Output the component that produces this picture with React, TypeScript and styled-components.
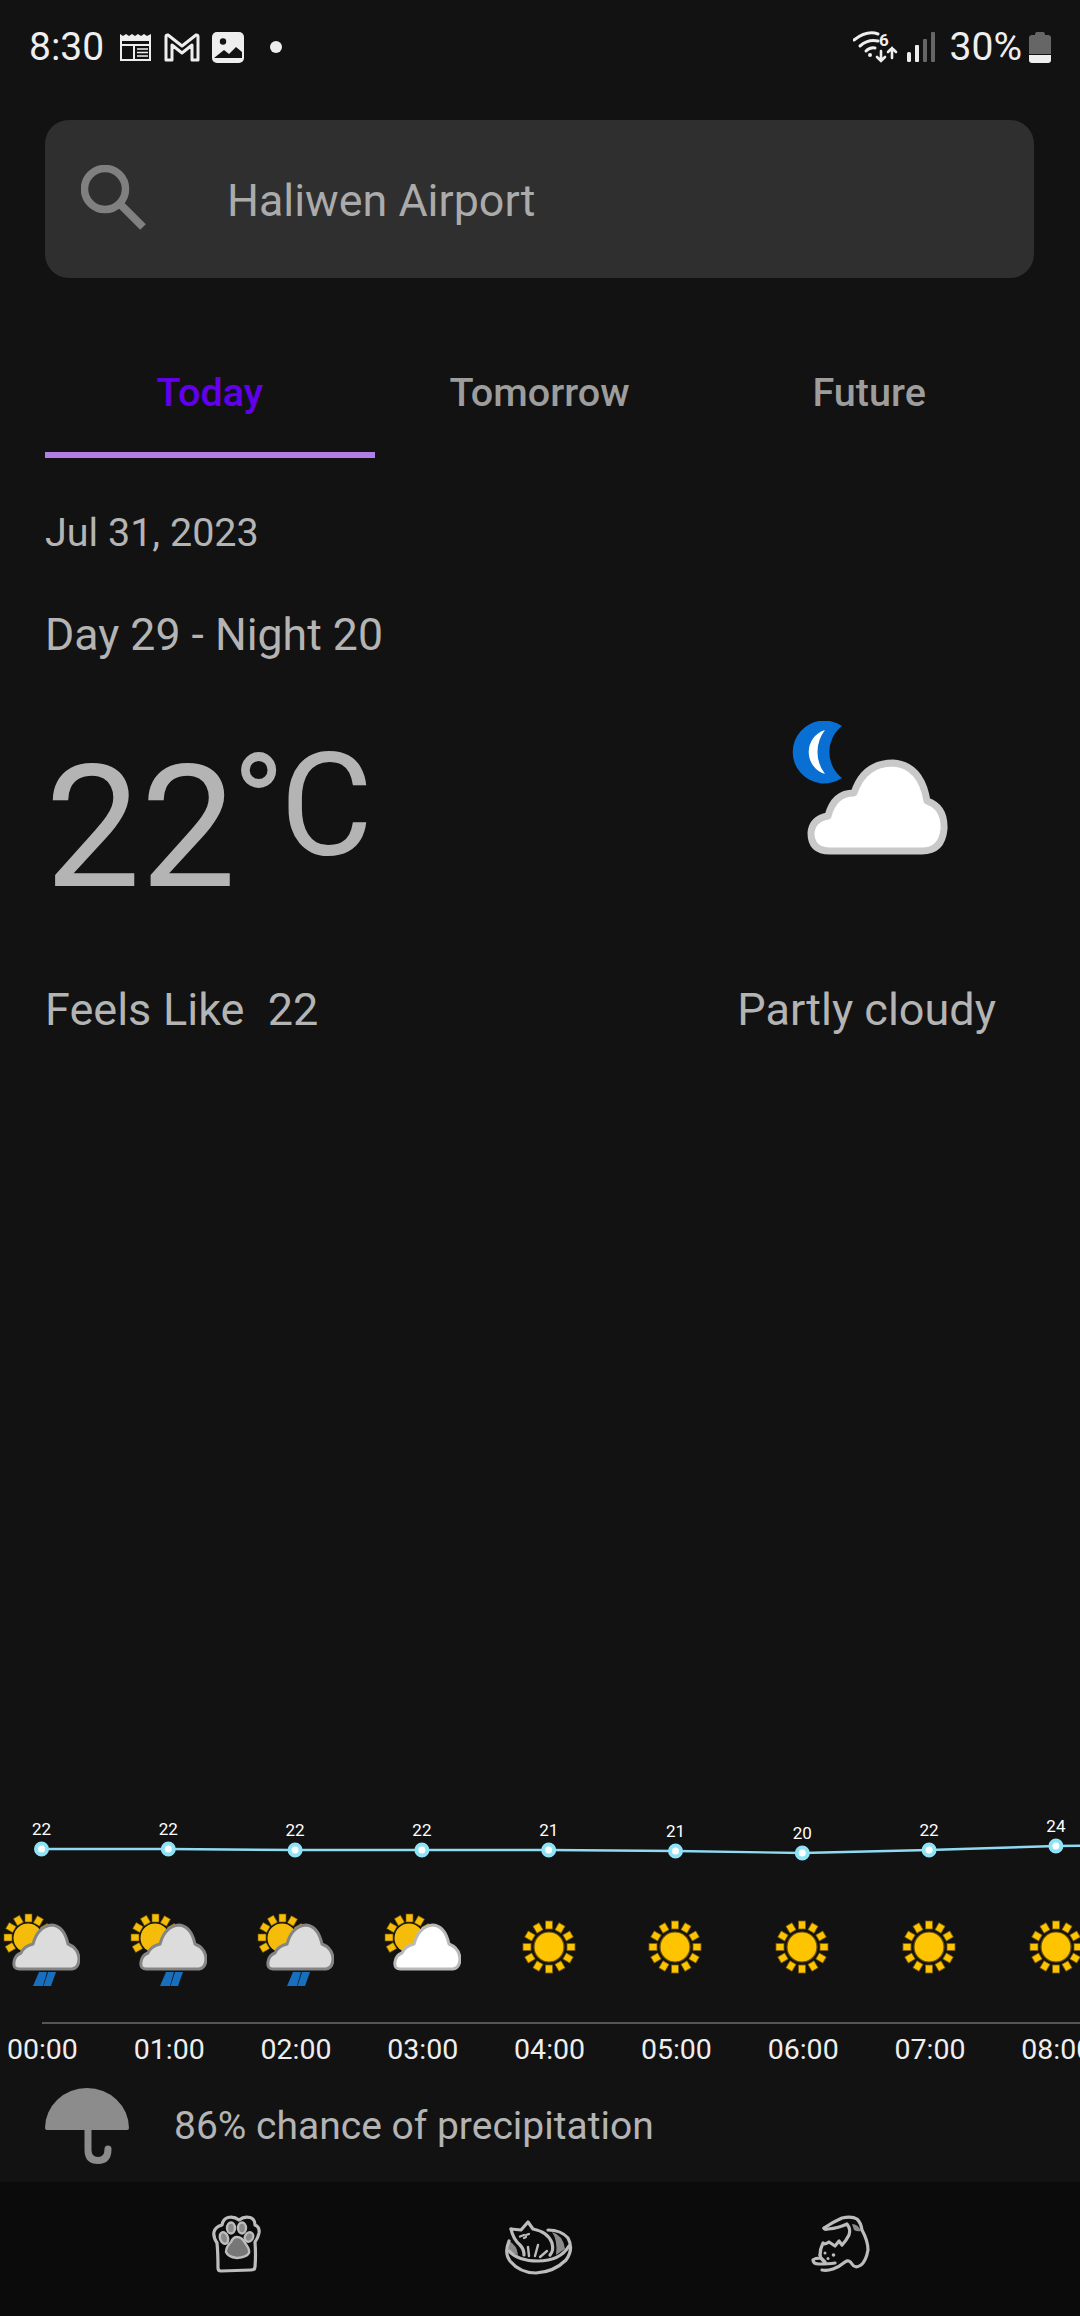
import React from "react";
import styled, { createGlobalStyle } from "styled-components";

const GlobalStyle = createGlobalStyle`
  html, body {
    margin: 0;
    padding: 0;
    background: #121212;
  }
  * {
    box-sizing: border-box;
  }
`;

const Page = styled.div`
  width: 1080px;
  height: 2316px;
  display: flex;
  flex-direction: column;
  overflow: hidden;
  background: #121212;
  color: #b4b4b4;
  font-family: Roboto, "Liberation Sans", sans-serif;
`;

const StatusBar = styled.div`
  height: 94px;
  flex: none;
  display: flex;
  align-items: center;
  justify-content: space-between;
  padding: 0 29px;
  color: #eeeeee;
`;

const StatusGroup = styled.div`
  display: flex;
  align-items: center;
`;

const StatusText = styled.span<{ $left?: number }>`
  font-size: 39px;
  line-height: 40px;
  margin-left: ${(p) => p.$left ?? 0}px;
`;

const StatusIcon = styled.svg<{ $left: number }>`
  display: block;
  flex: none;
  margin-left: ${(p) => p.$left}px;
`;

const SearchBox = styled.div`
  flex: none;
  height: 158px;
  margin: 26px 46px 0 45px;
  padding: 0 0 0 36px;
  display: flex;
  align-items: center;
  background: #2f2f2f;
  border-radius: 24px;
`;

const SearchIcon = styled.svg`
  display: block;
  flex: none;
  margin-right: 81px;
  margin-bottom: 3px;
`;

const SearchText = styled.span`
  font-size: 44.8px;
  margin-top: 2px;
  color: #ababab;
`;

const Tabs = styled.div`
  flex: none;
  margin: 54px 46px 0 45px;
  display: grid;
  grid-template-columns: repeat(3, 1fr);
`;

const Tab = styled.div<{ $active?: boolean }>`
  height: 126px;
  display: flex;
  align-items: center;
  justify-content: center;
  font-size: 39.6px;
  font-weight: 500;
  color: ${(p) => (p.$active ? "#6200ee" : "#9d9d9d")};
  border-bottom: 6px solid ${(p) => (p.$active ? "#b07ee6" : "transparent")};
`;

const Details = styled.div`
  flex: none;
  padding: 0 84px 0 45px;
`;

const DateLine = styled.div`
  margin-top: 50px;
  font-size: 39.5px;
  line-height: 50px;
`;

const DayNight = styled.div`
  margin-top: 47px;
  font-size: 44.6px;
  line-height: 60px;
`;

const NowRow = styled.div`
  display: flex;
  align-items: flex-start;
  justify-content: space-between;
  height: 380px;
`;

const Temperature = styled.div`
  margin-top: 63px;
  font-size: 170px;
  line-height: 200px;
  white-space: nowrap;
`;

const Unit = styled.span`
  font-size: 142px;
  vertical-align: 31px;
  line-height: 0;
  margin-left: -4px;
  letter-spacing: -5px;
`;

const NowSide = styled.div`
  display: flex;
  flex-direction: column;
  align-items: center;
`;

const MainWeatherIcon = styled.svg`
  display: block;
  margin: 56px 0 125px 6px;
`;

const FeelsLike = styled.div`
  margin-top: 52px;
  font-size: 45px;
  line-height: 60px;
  white-space: pre;
  word-spacing: 0.5px;
`;

const Condition = styled.div`
  font-size: 45px;
  line-height: 60px;
`;

const Hourly = styled.div`
  margin-top: auto;
  flex: none;
`;

const ChartSvg = styled.svg`
  display: block;
  margin-left: -22px;
`;

const ChartLabel = styled.text`
  font-family: Roboto, "Liberation Sans", sans-serif;
  font-size: 17px;
  fill: #ffffff;
  text-anchor: middle;
`;

const HourRow = styled.div<{ $height: number; $top: number; $left: number }>`
  display: flex;
  margin: ${(p) => p.$top}px 0 0 ${(p) => p.$left}px;
  height: ${(p) => p.$height}px;
`;

const HourCell = styled.div`
  flex: none;
  width: 126.8px;
  display: flex;
  align-items: center;
  justify-content: center;
  font-size: 28.5px;
  color: #eeeeee;
`;

const Axis = styled.div`
  height: 2px;
  margin: 36px 0 0 42px;
  background: #555555;
`;

const Precip = styled.div`
  height: 108px;
  display: flex;
  align-items: center;
  padding: 0 0 4px 45px;
  font-size: 39px;
`;

const UmbrellaIcon = styled.svg`
  display: block;
  flex: none;
  margin-right: 45px;
`;

const BottomNav = styled.nav`
  flex: none;
  height: 134px;
  padding: 0 85px 8px 95px;
  display: grid;
  grid-template-columns: repeat(3, 1fr);
  align-items: center;
  justify-items: center;
  background: #0b0b0b;
`;

const NavIcon = styled.svg`
  display: block;
  fill: none;
  stroke: #bdbdbd;
  stroke-width: 3.2;
  stroke-linecap: round;
  stroke-linejoin: round;
`;

type Kind = "rain" | "cloud" | "sun";

const HOURS: { time: string; temp: number; y: number; kind: Kind }[] = [
  { time: "00:00", temp: 22, y: 39, kind: "rain" },
  { time: "01:00", temp: 22, y: 39, kind: "rain" },
  { time: "02:00", temp: 22, y: 40, kind: "rain" },
  { time: "03:00", temp: 22, y: 40, kind: "cloud" },
  { time: "04:00", temp: 21, y: 40, kind: "sun" },
  { time: "05:00", temp: 21, y: 41, kind: "sun" },
  { time: "06:00", temp: 20, y: 43, kind: "sun" },
  { time: "07:00", temp: 22, y: 40, kind: "sun" },
  { time: "08:00", temp: 24, y: 36, kind: "sun" },
];

const STEP = 126.8;
const pointX = (i: number) => 63.5 + i * STEP;

function Chart() {
  const line = HOURS.map((h, i) => `${pointX(i)},${h.y}`).join(" ") + ` ${pointX(9)},35`;
  return (
    <ChartSvg width="1160" height="70" viewBox="0 0 1160 70">
      <polyline points={line} fill="none" stroke="#8fdcf2" strokeWidth="2.4" />
      {HOURS.map((h, i) => (
        <g key={h.time}>
          <circle cx={pointX(i)} cy={h.y} r="5.5" fill="#ffffff" stroke="#8fe3f7" strokeWidth="4" />
          <ChartLabel x={pointX(i)} y={h.y - 14}>
            {h.temp}
          </ChartLabel>
        </g>
      ))}
    </ChartSvg>
  );
}

function WeatherIcon({ kind }: { kind: Kind }) {
  if (kind === "sun") {
    return (
      <svg width="78" height="78" viewBox="0 0 78 78" style={{ display: "block" }}>
        {Array.from({ length: 12 }).map((_, i) => (
          <rect
            key={i}
            x="35.5"
            y="13"
            width="7"
            height="8"
            fill="#ffc400"
            stroke="#7d5c00"
            strokeWidth="0.8"
            transform={`rotate(${i * 30} 39 39)`}
          />
        ))}
        <circle cx="39" cy="39" r="15" fill="#ffc400" stroke="#6f5200" strokeWidth="1.2" />
      </svg>
    );
  }
  const rays = [-90, -60, -30, -120, -150, 180, 150];
  return (
    <svg width="78" height="78" viewBox="0 0 78 78" style={{ display: "block" }}>
      {rays.map((a) => (
        <rect
          key={a}
          x="23"
          y="6"
          width="7"
          height="8"
          fill="#f5bd0a"
          stroke="#6f5200"
          strokeWidth="0.6"
          transform={`rotate(${a + 90} 26 30)`}
        />
      ))}
      <circle cx="26" cy="30" r="14.5" fill="#f5bd0a" />
      <path
        d="M17 61 Q11 61 12 54 Q13 47 19 45 Q22 38 31 36 Q36 18 50 17 Q62 18 66 36 Q76 40 77 50 Q77 60 70 61 Z"
        fill={kind === "rain" ? "#dcdcdc" : "#ffffff"}
        stroke={kind === "rain" ? "#858585" : "#b9b9b9"}
        strokeWidth="3"
      />
      {kind === "rain" && (
        <g fill="#176fbe">
          <path d="M37 64 L45 64 L41 78 L31 78 Z" />
          <path d="M46 64 L54 64 L49 78 L41.5 78 Z" />
        </g>
      )}
    </svg>
  );
}

export default function App() {
  return (
    <Page>
      <GlobalStyle />
      <StatusBar>
        <StatusGroup>
          <StatusText>8:30</StatusText>
          <StatusIcon $left={15} width="33" height="30" viewBox="0 0 33 30">
            <path d="M1 2 L4 4 L7 2 L10 4 L13 2 L16 4 L19 2 L22 4 L25 2 L28 4 L32 2 V29 H1 Z" fill="#eeeeee" />
            <rect x="3" y="9" width="27" height="18" fill="#121212" />
            <rect x="3" y="12" width="27" height="2" fill="#eeeeee" />
            <rect x="14" y="12" width="2" height="15" fill="#eeeeee" />
            <path d="M18 17 H29 M18 20.5 H29 M18 24 H29" stroke="#eeeeee" strokeWidth="1.6" />
          </StatusIcon>
          <StatusIcon $left={12} width="36" height="29" viewBox="0 0 36 29">
            <path
              d="M2 27 V3.5 Q2 1.5 4 2 L18 13 L32 2 Q34 1.5 34 3.5 V27 H28 V12 L18 20 L8 12 V27 Z"
              fill="none"
              stroke="#eeeeee"
              strokeWidth="3"
              strokeLinejoin="round"
            />
          </StatusIcon>
          <StatusIcon $left={12} width="32" height="31" viewBox="0 0 32 31">
            <rect width="32" height="31" rx="5" fill="#eeeeee" />
            <circle cx="11" cy="9.5" r="3.2" fill="#121212" />
            <path d="M2 26 L12 18 L17 22 L24 15 L30 20 V26 H2 Z" fill="#121212" />
          </StatusIcon>
          <StatusIcon $left={26} width="12" height="12" viewBox="0 0 12 12">
            <circle cx="6" cy="6" r="6" fill="#eeeeee" />
          </StatusIcon>
        </StatusGroup>
        <StatusGroup>
          <StatusIcon $left={0} width="45" height="32" viewBox="0 0 45 32">
            <g fill="none" stroke="#eeeeee" strokeWidth="3" strokeLinecap="round">
              <path d="M1 9 Q14 -1 25 3" />
              <path d="M7 15 Q15 8 25 10" />
              <path d="M13 20 Q17 16 22 17" />
              <path d="M28 20 V30 M24 26 L28 30 L32 26" strokeWidth="2.6" />
              <path d="M39 27 V17 M35 21 L39 17 L43 21" strokeWidth="2.6" />
            </g>
            <circle cx="17" cy="24" r="2" fill="#eeeeee" />
            <text x="26" y="15" fontSize="17" fontWeight="700" fill="#eeeeee" fontFamily="Roboto, sans-serif">
              6
            </text>
          </StatusIcon>
          <StatusIcon $left={9} width="28" height="30" viewBox="0 0 28 30">
            <rect x="0" y="20" width="4" height="10" rx="1.5" fill="#eeeeee" />
            <rect x="8" y="13" width="4" height="17" rx="1" fill="#eeeeee" />
            <rect x="16" y="7" width="4" height="23" rx="1" fill="#666666" />
            <rect x="24" y="0" width="4" height="30" rx="1" fill="#666666" />
          </StatusIcon>
          <StatusText $left={15}>30%</StatusText>
          <StatusIcon $left={7} width="22" height="31" viewBox="0 0 22 31">
            <path d="M6 3 Q6 0 8 0 H14 Q16 0 16 3 H19 Q22 3 22 6 V22 H0 V6 Q0 3 3 3 Z" fill="#666666" />
            <path d="M0 23 H22 V28 Q22 31 19 31 H3 Q0 31 0 28 Z" fill="#eeeeee" />
          </StatusIcon>
        </StatusGroup>
      </StatusBar>

      <SearchBox>
        <SearchIcon width="65" height="65" viewBox="0 0 65 65">
          <circle cx="24" cy="24" r="20.5" fill="none" stroke="#808080" strokeWidth="7.5" />
          <path d="M39 39 L62 62" stroke="#808080" strokeWidth="8" />
        </SearchIcon>
        <SearchText>Haliwen Airport</SearchText>
      </SearchBox>

      <Tabs>
        <Tab $active>Today</Tab>
        <Tab>Tomorrow</Tab>
        <Tab>Future</Tab>
      </Tabs>

      <Details>
        <DateLine>Jul 31, 2023</DateLine>
        <DayNight>Day 29 - Night 20</DayNight>
        <NowRow>
          <div>
            <Temperature>
              22<Unit>°C</Unit>
            </Temperature>
            <FeelsLike>Feels Like  22</FeelsLike>
          </div>
          <NowSide>
            <MainWeatherIcon width="160" height="134" viewBox="0 0 160 134">
              <path d="M52 5 A31.5 31.5 0 1 0 52 57 A33 33 0 0 1 52 5 Z" fill="#0a6fd2" />
              <path d="M35 9 A23 23 0 0 0 35 53 A36 36 0 0 1 35 9 Z" fill="#ffffff" />
              <path
                d="M40 130 Q21 130 21 112 Q22 98 38 95 Q44 72 64 72 Q74 42 103 42 Q131 44 137 80 Q155 86 154 108 Q152 130 132 130 Z"
                fill="#ffffff"
                stroke="#c9c9c9"
                strokeWidth="7"
                strokeLinejoin="round"
              />
            </MainWeatherIcon>
            <Condition>Partly cloudy</Condition>
          </NowSide>
        </NowRow>
      </Details>

      <Hourly>
        <Chart />
        <HourRow $height={78} $top={28} $left={-22}>
          {HOURS.map((h) => (
            <HourCell key={h.time}>
              <WeatherIcon kind={h.kind} />
            </HourCell>
          ))}
        </HourRow>
        <Axis />
        <HourRow $height={50} $top={0} $left={-21}>
          {HOURS.map((h) => (
            <HourCell key={h.time}>{h.time}</HourCell>
          ))}
        </HourRow>
        <Precip>
          <UmbrellaIcon width="84" height="76" viewBox="0 0 84 76">
            <path d="M0 40 A42 40 0 0 1 84 40 Q84 42 82 42 L2 42 Q0 42 0 40 Z" fill="#8c8c8c" />
            <path d="M43 40 V62 Q43 72.5 53 72.5 Q63 72.5 63 61" fill="none" stroke="#8c8c8c" strokeWidth="7" strokeLinecap="round" />
          </UmbrellaIcon>
          86% chance of precipitation
        </Precip>
      </Hourly>

      <BottomNav>
        <NavIcon width="100" height="80" viewBox="0 0 100 80">
          <path d="M23 63 Q23 48 22 38 Q18 32 19 27 Q20 22 27 20 Q28 14 33 12.5 Q39 11 44 15 Q49 11 55 12.5 Q60 14 60 20 Q65 22 64 28 Q63 33 60 37 Q61 50 60 62 Q60 65 56 65 L26 66 Q23 66 23 63 Z" />
          <ellipse cx="36" cy="23" rx="4" ry="5.5" fill="#8a8a8a" strokeWidth="2.4" />
          <ellipse cx="47" cy="23" rx="4" ry="5.5" fill="#8a8a8a" strokeWidth="2.4" />
          <ellipse cx="29" cy="33" rx="4" ry="6" fill="#8a8a8a" strokeWidth="2.4" transform="rotate(-18 29 33)" />
          <ellipse cx="54" cy="32" rx="4" ry="5" fill="#8a8a8a" strokeWidth="2.4" transform="rotate(30 54 32)" />
          <path d="M42 32 Q47 32 50 38 Q55 44 54 48 Q52 52 42 53 Q33 52 31 47 Q31 42 36 37 Q38 32 42 32 Z" fill="#777777" strokeWidth="2.4" />
        </NavIcon>
        <NavIcon width="100" height="80" viewBox="5 0 100 80">
          <path d="M62 27 Q73 30 75 44 L66 50 Q68 36 62 27 Z" fill="#8a8a8a" stroke="none" />
          <path d="M19 36 Q27 40 28 50 Q21 48 18 44 Z" fill="#8a8a8a" stroke="none" />
          <path d="M19 36 Q14 48 20 56 Q30 68 46 68 Q64 67 76 55 Q84 44 78 33 Q71 25 58 25" />
          <path d="M19 46 Q28 56 48 56 Q70 56 79 41" />
          <path d="M21 24 L31 25 L38 17 L43 24 Q58 27 62 38 Q64 46 60 50" />
          <path d="M21 24 Q23 34 30 40 Q34 44 34 50" />
          <path d="M38 42 L39 51 M48 40 L45 51 M57 46 L50 52" strokeWidth="2.4" />
          <path d="M30 31.5 L34 30 M36 30 L39 29 M34 33 L36 32" strokeWidth="2.2" />
        </NavIcon>
        <NavIcon width="100" height="80" viewBox="0 0 100 80">
          <path d="M57 19 Q63 19 66 26 Q62 27 59 25 Z" fill="#8a8a8a" stroke="none" />
          <path d="M29 23 Q38 17 47 13 Q57 11 62 14 Q66 18 67 25 Q73 36 73 45 Q71 56 66 60 Q60 64 57 59 Q54 54 50 57 Q44 62 38 64 Q32 66 27 65" />
          <path d="M29 23 Q29 25 33 24 Q44 23 52 19 Q56 24 54 30 Q51 36 47 40 L44 36 L40 41 L34 37 Q30 40 28 38 Q25 44 25 50" />
          <path d="M25 50 Q26 55 30 57 L26 53 Q20 53 18 55 Q18 59 24 59 Q34 59 40 58" />
          <circle cx="30" cy="48" r="1.5" fill="#bdbdbd" stroke="none" />
          <circle cx="38.5" cy="50" r="1.8" fill="#bdbdbd" stroke="none" />
          <circle cx="33" cy="53.5" r="1.5" fill="#bdbdbd" stroke="none" />
        </NavIcon>
      </BottomNav>
    </Page>
  );
}
